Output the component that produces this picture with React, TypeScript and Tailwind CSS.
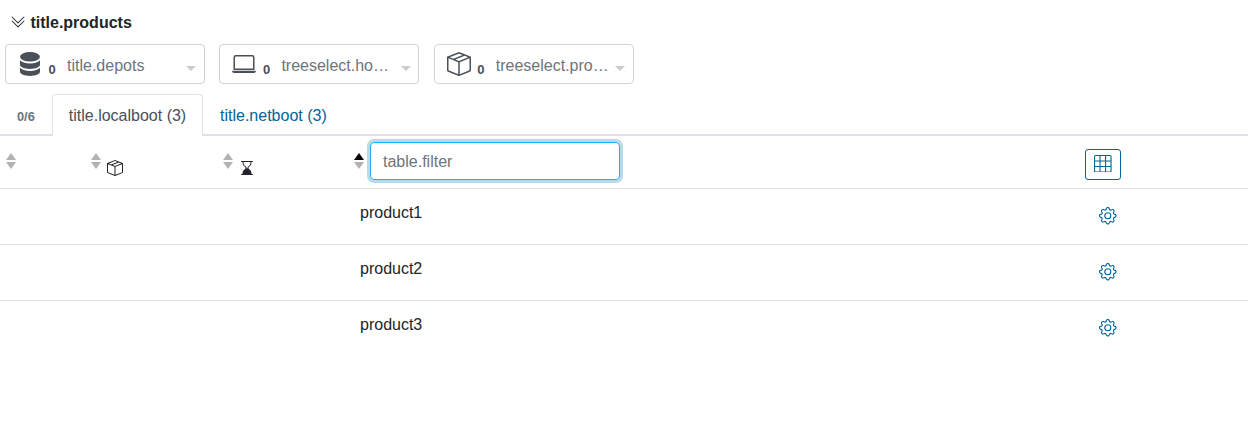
import type { ReactNode } from 'react';
import {
  BsBoxSeam,
  BsChevronDoubleDown,
  BsGear,
  BsGrid3X3,
  BsHourglassBottom,
  BsLaptop,
} from 'react-icons/bs';

function DatabaseIcon() {
  return (
    <svg width="24" height="24" viewBox="0 0 24 24" fill="currentColor">
      <ellipse cx="12" cy="4.8" rx="10" ry="4.8" />
      <path d="M2 8.3c1.6 2 5.300 3.100 10 3.100s8.400-1.100 10-3.100v4.500c0 2.300-4.500 4.200-10 4.200S2 15.100 2 12.800z" />
      <path d="M2 15.800c1.600 2 5.300 3.100 10 3.100s8.400-1.100 10-3.100v4c0 2.300-4.500 4.200-10 4.200S2 22.100 2 19.800z" />
    </svg>
  );
}

function TreeSelect({ icon, label }: { icon: ReactNode; label: string }) {
  return (
    <div className="flex h-10 w-[200px] items-center rounded border border-[#ced4da] pl-3 text-[#495057]">
      <span className="w-[25px] shrink-0">{icon}</span>
      <b className="mt-[11px] ml-[5.5px] w-[18.5px] shrink-0 text-[13px] leading-5">{0}</b>
      <span className="mt-[3px] w-[113px] shrink-0 truncate leading-6 text-[#6c757d]">{label}</span>
      <svg className="mt-[9px] ml-[6.4px] shrink-0 text-[#ccc]" width="10" height="5" viewBox="0 0 10 5">
        <path d="M0 0h10L5 5z" fill="currentColor" />
      </svg>
    </div>
  );
}

function SortArrows({ active = false }: { active?: boolean }) {
  return (
    <svg className="mt-[17px] shrink-0" width="10" height="16" viewBox="0 0 10 16">
      <path d="M0 7L5 0l5 7z" fill={active ? '#000' : '#b2b2b2'} />
      <path d="M0 9h10l-5 7z" fill="#b2b2b2" />
    </svg>
  );
}

export default function App() {
  return (
    <main className="h-[422px] overflow-hidden bg-white font-['Liberation_Sans',sans-serif] text-base text-[#212529]">
      <header className="flex h-11 items-center pl-2.5">
        <BsChevronDoubleDown size={16} />
        <h1 className="mt-0.5 ml-[4.45px] font-bold">title.products</h1>
      </header>

      <div className="flex gap-[14.4px] pl-[5px]">
        <TreeSelect icon={<DatabaseIcon />} label="title.depots" />
        <TreeSelect icon={<BsLaptop size={24} />} label="treeselect.ho…" />
        <TreeSelect icon={<BsBoxSeam size={24} />} label="treeselect.pro…" />
      </div>

      <nav className="mt-[10px] flex h-[42px] shrink-0">
        <span className="w-[52px] border-b-2 border-[#dee2e6] pt-[13px] pl-[17px] text-[12.8px] leading-5 font-bold text-[#6c757d]">0/6</span>
        <span className="w-[151px] rounded-t border border-b-0 border-[#dee2e6] pt-[9px] text-center leading-6 text-[#495057]">
          title.localboot (3)
        </span>
        <span className="flex-1 border-b-2 border-[#dee2e6] pt-[10px] pl-[17px] leading-6 text-[#00659b]">title.netboot (3)</span>
      </nav>

      <div className="flex h-[53px] border-b border-[#dee2e6] pl-1.5">
        <div className="w-[85px]"><SortArrows /></div>
        <div className="flex w-[131.5px]">
          <SortArrows />
          <BsBoxSeam className="mt-6 ml-1.5" size={16} />
        </div>
        <div className="flex w-[131.5px]">
          <SortArrows />
          <BsHourglassBottom className="mt-6 ml-1.5" size={16} />
        </div>
        <div className="flex w-[731px]">
          <SortArrows active />
          <input
            className="mt-[6px] ml-1.5 h-[38px] w-[250px] rounded border border-[#1badff] px-3 pt-0.5 text-base outline-none ring-[3px] ring-[#00659b40] placeholder:text-[#6c757d]"
            placeholder="table.filter"
          />
        </div>
        <button className="mt-[13px] flex h-[31px] w-9 items-center justify-center rounded-[3px] border border-[#00659b] pb-0.5 text-[#00659b]">
          <BsGrid3X3 size={17.6} />
        </button>
      </div>

      {['product1', 'product2', 'product3'].map((name) => (
        <div key={name} className="flex h-14 border-b border-[#dee2e6] pl-[360px] last:border-0">
          <span className="w-[739px] pt-3 leading-6">{name}</span>
          <BsGear className="mt-[18px] text-[#00659b]" size={17.6} />
        </div>
      ))}
    </main>
  );
}
